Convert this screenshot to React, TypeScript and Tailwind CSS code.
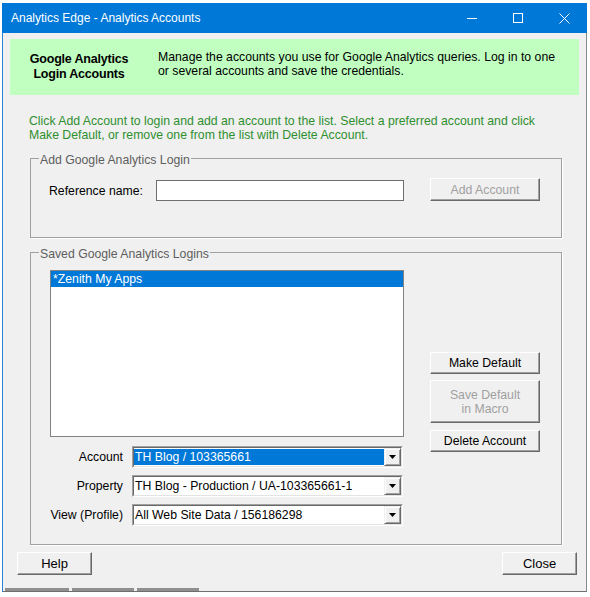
import React from "react";

function Btn({
  children,
  disabled,
  className = "",
}: {
  children: React.ReactNode;
  disabled?: boolean;
  className?: string;
}) {
  return (
    <div
      className={
        "flex items-center justify-center text-center bg-[#f0f0f0] border border-t-white border-l-white border-r-[#696969] border-b-[#696969] shadow-[inset_-1px_-1px_0_#a0a0a0] " +
        (disabled ? "text-[#a0a0a0] " : "text-black ") +
        className
      }
    >
      {children}
    </div>
  );
}

function Combo({ value, selected }: { value: string; selected?: boolean }) {
  return (
    <div className="flex w-[271px] h-[22px] border border-t-[#a0a0a0] border-l-[#a0a0a0] border-r-white border-b-white">
      <div className="flex flex-1 bg-white border border-t-[#696969] border-l-[#696969] border-r-[#e3e3e3] border-b-[#e3e3e3]">
        <div
          className={
            "flex-1 my-[1px] pl-[1px] flex items-center " +
            (selected ? "bg-[#0078d7] text-white" : "text-black")
          }
        >
          {value}
        </div>
        <div className="w-[17px] flex items-center justify-center bg-[#f0f0f0] border border-t-[#f0f0f0] border-l-[#f0f0f0] border-r-[#696969] border-b-[#696969] shadow-[inset_1px_1px_0_#fff,inset_-1px_-1px_0_#a0a0a0]">
          <svg width="7" height="4" viewBox="0 0 7 4">
            <polygon points="0,0 7,0 3.5,4" fill="#000" />
          </svg>
        </div>
      </div>
    </div>
  );
}

export default function App() {
  return (
    <div className="w-[590px] h-[597px] bg-white overflow-hidden font-['Liberation_Sans',Arial,sans-serif] text-[12.25px] leading-[14px] text-black">
      <div className="pt-[3px] pl-[2px]">
        <div className="w-[585px] flex flex-col">
          {/* Title bar */}
          <div className="h-[30px] bg-[#0078d7] flex items-center justify-between">
            <div className="pl-[9px] text-white text-[12px]">Analytics Edge - Analytics Accounts</div>
            <div className="flex h-full">
              <div className="w-[46px] h-full flex items-center justify-center">
                <svg width="10" height="10" viewBox="0 0 10 10">
                  <path d="M0 5.5H10" stroke="#fff" strokeWidth="1" />
                </svg>
              </div>
              <div className="w-[46px] h-full flex items-center justify-center">
                <svg width="10" height="10" viewBox="0 0 10 10">
                  <rect x="0.5" y="0.5" width="9" height="9" fill="none" stroke="#fff" strokeWidth="1" />
                </svg>
              </div>
              <div className="w-[46px] h-full flex items-center justify-center">
                <svg width="11" height="11" viewBox="0 0 11 11">
                  <path d="M0.5 0.5L10.5 10.5M10.5 0.5L0.5 10.5" stroke="#fff" strokeWidth="1" />
                </svg>
              </div>
            </div>
          </div>

          {/* Content */}
          <div className="h-[559px] bg-[#f0f0f0] border-l border-l-[#2a84d8] border-r border-r-[#8a8a8a] border-b border-b-[#6e6e6e] flex flex-col">
            {/* Banner */}
            <div className="mt-[6px] mx-[7px] h-[56px] bg-[#c0ffc0] flex">
              <div className="w-[138px] flex items-center justify-center text-center font-bold text-[12.5px] leading-[15px] tracking-[-0.2px]">
                Google Analytics
                <br />
                Login Accounts
              </div>
              <div className="ml-[10px] pt-[11px]">
                Manage the accounts you use for Google Analytics queries. Log in to one
                <br />
                or several accounts and save the credentials.
              </div>
            </div>

            {/* Instructions */}
            <div className="mt-[19px] ml-[26px] text-[#2f8f2f]">
              Click Add Account to login and add an account to the list. Select a preferred account and click
              <br />
              Make Default, or remove one from the list with Delete Account.
            </div>

            {/* Group 1 */}
            <fieldset className="mt-[7px] ml-[27px] w-[532px] h-[89px] border border-[#a0a0a0] shadow-[1px_1px_0_#fff]">
              <legend className="ml-[8px] px-[1px] pt-[4px] leading-[14px] text-[#5e5e5e]">
                Add Google Analytics Login
              </legend>
              <div className="flex items-start mt-[11px] pl-[18px]">
                <div className="w-[107px] mt-[6px]">Reference name:</div>
                <div className="w-[248px] h-[21px] mt-[2px] bg-white border border-[#6e6e6e]" />
                <Btn disabled className="ml-[26px] w-[110px] h-[23px]">
                  Add Account
                </Btn>
              </div>
            </fieldset>

            {/* Group 2 */}
            <fieldset className="mt-[5px] ml-[27px] w-[532px] h-[302px] border border-[#a0a0a0] shadow-[1px_1px_0_#fff]">
              <legend className="ml-[8px] px-[1px] pt-[4px] leading-[14px] text-[#5e5e5e]">
                Saved Google Analytics Logins
              </legend>
              <div className="flex">
                <div className="w-[373px] flex flex-col">
                  <div className="ml-[19px] mt-[9px] w-[354px] h-[167px] border border-[#828282] bg-white">
                    <div className="h-[16px] bg-[#0078d7] text-white pl-[2px] leading-[16px]">*Zenith My Apps</div>
                  </div>
                  <div className="mt-[9px] flex flex-col gap-[7px]">
                    <div className="flex items-center h-[22px]">
                      <div className="w-[92px] text-right">Account</div>
                      <div className="ml-[9px]">
                        <Combo value="TH Blog / 103365661" selected />
                      </div>
                    </div>
                    <div className="flex items-center h-[22px]">
                      <div className="w-[92px] text-right">Property</div>
                      <div className="ml-[9px]">
                        <Combo value="TH Blog - Production / UA-103365661-1" />
                      </div>
                    </div>
                    <div className="flex items-center h-[22px]">
                      <div className="w-[92px] text-right">View (Profile)</div>
                      <div className="ml-[9px]">
                        <Combo value="All Web Site Data / 156186298" />
                      </div>
                    </div>
                  </div>
                </div>
                <div className="ml-[26px] mt-[91px] flex flex-col">
                  <Btn className="w-[110px] h-[22px]">Make Default</Btn>
                  <Btn disabled className="mt-[6px] w-[110px] h-[43px]">
                    Save Default
                    <br />
                    in Macro
                  </Btn>
                  <Btn className="mt-[7px] w-[110px] h-[22px]">Delete Account</Btn>
                </div>
              </div>
            </fieldset>

            {/* Bottom buttons */}
            <div className="mt-[7px] flex justify-between pl-[14px] pr-[9px]">
              <Btn className="w-[75px] h-[23px] text-[13px]">Help</Btn>
              <Btn className="w-[75px] h-[23px] text-[13px]">Close</Btn>
            </div>

            <div className="mt-auto flex h-[3px] pl-[2px] gap-[3px]">
              <div className="w-[64px] h-full bg-[#8f8f8f]" />
              <div className="w-[62px] h-full bg-[#8f8f8f]" />
              <div className="w-[62px] h-full bg-[#8f8f8f]" />
            </div>
          </div>
        </div>
      </div>
    </div>
  );
}
